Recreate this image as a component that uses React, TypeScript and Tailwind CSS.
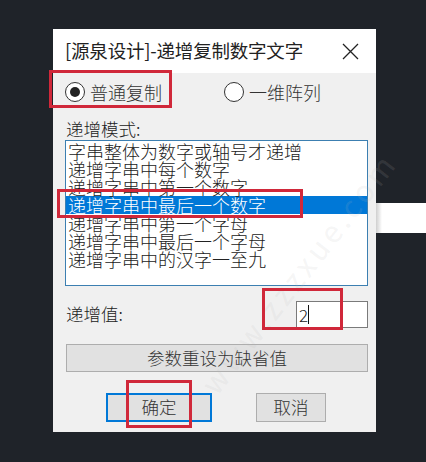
const items = [
  "字串整体为数字或轴号才递增",
  "递增字串中每个数字",
  "递增字串中第一个数字",
  "递增字串中最后一个数字",
  "递增字串中第一个字母",
  "递增字串中最后一个字母",
  "递增字串中的汉字一至九",
];

const Radio = ({ checked, label }: { checked?: boolean; label: string }) => (
  <div className="flex items-center gap-[5px]">
    <div className="w-[20px] h-[20px] rounded-full border-[1.5px] border-[#333] bg-white flex items-center justify-center">
      {checked && <div className="w-[10px] h-[10px] rounded-full bg-[#222]" />}
    </div>
    <span className="text-[18px] leading-[20px] font-light text-[#333]">{label}</span>
  </div>
);

const App = () => {
  return (
    <div
      className="relative w-[426px] h-[462px] bg-[#1f2329] overflow-hidden"
      style={{ fontFamily: '"Noto Sans CJK SC", "Liberation Sans", sans-serif' }}
    >
      <div className="flex pt-[29px] pl-[53px]">
        {/* dialog */}
        <div className="w-[323px] flex flex-col">
          <div className="h-[44px] bg-white flex items-center justify-between pl-[12px] pr-[17px]">
            <span className="text-[18.5px] text-[#222] tracking-[-0.2px]">[源泉设计]-递增复制数字文字</span>
            <svg width="17" height="17" viewBox="0 0 17 17">
              <path d="M1 1 L16 16 M16 1 L1 16" stroke="#222" strokeWidth="1.3" />
            </svg>
          </div>
          <div className="bg-[#f0f0f0] h-[359px] pl-[12px] pr-[8px] flex flex-col font-light">
            <div className="mt-[9px] flex items-center gap-[62px]">
              <Radio checked label="普通复制" />
              <Radio label="一维阵列" />
            </div>
            <div className="mt-[18px] pl-[1px] text-[17.5px] leading-[18px] text-[#222]">递增模式:</div>
            <div className="mt-[2px] h-[146px] border border-[#3c7fb1] bg-white pt-[1px]">
              {items.map((t, i) => (
                <div
                  key={t}
                  className={
                    i === 3
                      ? "h-[18px] leading-[18px] text-[18px] pl-[2px] bg-[#0078d7] text-white"
                      : "h-[18px] leading-[18px] text-[18px] pl-[2px] text-[#222]"
                  }
                >
                  {t}
                </div>
              ))}
            </div>
            <div className="mt-[15px] flex items-center justify-between">
              <span className="pl-[1px] text-[17.5px] text-[#222]">递增值:</span>
              <div className="w-[72px] h-[27px] bg-white border border-[#7a7a7a] flex items-center pl-[2px]">
                <span className="text-[17px] leading-[20px] text-[#222]">2</span>
                <span className="w-[1px] h-[19px] bg-[#111]" />
              </div>
            </div>
            <div className="mt-[16px] ml-[1px] h-[28px] bg-[#e1e1e1] border border-[#adadad] flex items-center justify-center text-[17.5px] text-[#333]">
              参数重设为缺省值
            </div>
            <div className="mt-[21px] flex pl-[41px] gap-[44px]">
              <div className="w-[106px] h-[29px] bg-[#e1e1e1] border-2 border-[#0078d7] flex items-center justify-center text-[17.5px] text-[#333]">
                确定
              </div>
              <div className="w-[70px] h-[29px] bg-[#e1e1e1] border border-[#adadad] flex items-center justify-center text-[17.5px] text-[#333]">
                取消
              </div>
            </div>
          </div>
        </div>
        {/* background strip behind dialog */}
        <div className="mt-[174px] w-[50px] h-[30px] bg-gradient-to-r from-[#cfcfcf] via-white via-[12%] to-white" />
      </div>

      {/* watermark */}
      <div className="absolute left-[150px] top-[250px] -rotate-[52deg] text-[30px] text-[#b8b8b8]/15 tracking-[4px] whitespace-nowrap pointer-events-none">
        www.zzzxue.com
      </div>

      {/* red annotation boxes */}
      <div className="absolute left-[49px] top-[70px] w-[123px] h-[38px] border-[3px] border-[#d0283a]" />
      <div className="absolute left-[57px] top-[189px] w-[246px] h-[29px] border-[3px] border-[#d0283a]" />
      <div className="absolute left-[262px] top-[288px] w-[81px] h-[42px] border-[3px] border-[#d0283a]" />
      <div className="absolute left-[126px] top-[380px] w-[66px] h-[48px] border-[3px] border-[#d0283a]" />
    </div>
  );
};

export default App;
